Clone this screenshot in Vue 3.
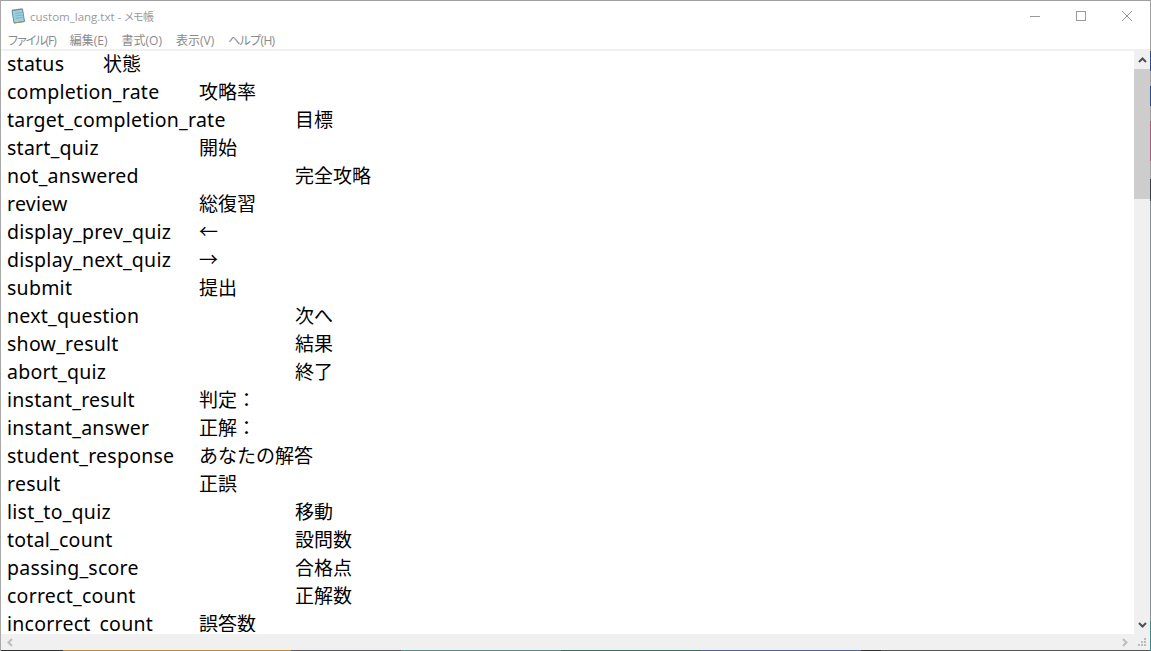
<script setup>
const rows = [
  ['status', '\t', '状態'],
  ['completion_rate', '\t', '攻略率'],
  ['target_completion_rate', '\t', '目標'],
  ['start_quiz', '\t\t', '開始'],
  ['not_answered', '\t\t', '完全攻略'],
  ['review', '\t\t', '総復習'],
  ['display_prev_quiz', '\t', '←'],
  ['display_next_quiz', '\t', '→'],
  ['submit', '\t\t', '提出'],
  ['next_question', '\t\t', '次へ'],
  ['show_result', '\t\t', '結果'],
  ['abort_quiz', '\t\t', '終了'],
  ['instant_result', '\t', '判定：'],
  ['instant_answer', '\t', '正解：'],
  ['student_response', '\t', 'あなたの解答'],
  ['result', '\t\t', '正誤'],
  ['list_to_quiz', '\t\t', '移動'],
  ['total_count', '\t\t', '設問数'],
  ['passing_score', '\t\t', '合格点'],
  ['correct_count', '\t\t', '正解数'],
  ['incorrect_count', '\t', '誤答数']
]
const menus = ['ファイル(F)', '編集(E)', '書式(O)', '表示(V)', 'ヘルプ(H)']
</script>

<template>
  <div class="window">
    <header class="titlebar">
      <svg class="app-icon" width="16" height="16" viewBox="0 0 16 16">
        <path d="M2 2.5 L12.5 1 L14.5 13.5 L4 15 Z" fill="#9fd0e0" stroke="#5f8fa5" stroke-width="1" />
        <path d="M5 5.5 L12 4.5 M5.3 8 L12.4 7 M5.7 10.5 L12.8 9.5" stroke="#7fb0c4" stroke-width="1" />
        <path d="M4 15 L14.5 13.5" stroke="#a89060" stroke-width="1" />
        <path d="M2.5 2.2 L12.5 0.8" stroke="#777" stroke-width="1.4" stroke-dasharray="1 1" />
      </svg>
      <span class="title">custom_lang.txt - <span class="title-app">メモ帳</span></span>
      <div class="controls">
        <svg width="46" height="30" viewBox="0 0 46 30"><path d="M18 15.5 H28" stroke="#999" stroke-width="1" /></svg>
        <svg width="46" height="30" viewBox="0 0 46 30"><rect x="18.5" y="10.5" width="9" height="9" fill="none" stroke="#999" /></svg>
        <svg width="46" height="30" viewBox="0 0 46 30"><path d="M18 10 L28 20 M28 10 L18 20" stroke="#999" stroke-width="1" /></svg>
      </div>
    </header>
    <nav class="menubar">
      <span v-for="m in menus" :key="m" class="menu">{{ m }}</span>
    </nav>
    <div class="main">
      <div class="text">
        <div v-for="r in rows" :key="r[0]" class="line"><span class="key">{{ r[0] }}</span>{{ r[1] }}<span class="val">{{ r[2] }}</span></div>
      </div>
      <div class="vscroll">
        <div class="arrow">
          <svg width="9" height="6" viewBox="0 0 9 6"><path d="M1 5 L4.5 1.5 L8 5" fill="none" stroke="#505050" stroke-width="2" /></svg>
        </div>
        <div class="thumb"></div>
        <div class="track"></div>
        <div class="arrow">
          <svg width="9" height="6" viewBox="0 0 9 6"><path d="M1 1 L4.5 4.5 L8 1" fill="none" stroke="#505050" stroke-width="2" /></svg>
        </div>
      </div>
    </div>
    <div class="hscroll">
      <div class="harrow">
        <svg width="6" height="9" viewBox="0 0 6 9"><path d="M5 1 L1.5 4.5 L5 8" fill="none" stroke="#bdbdbd" stroke-width="2" /></svg>
      </div>
      <div class="track"></div>
      <div class="harrow">
        <svg width="6" height="9" viewBox="0 0 6 9"><path d="M1 1 L4.5 4.5 L1 8" fill="none" stroke="#bdbdbd" stroke-width="2" /></svg>
      </div>
      <div class="grip">
        <svg width="10" height="10" viewBox="0 0 10 10" fill="#bcbcbc">
          <rect x="7" y="1" width="2" height="2" /><rect x="4" y="4" width="2" height="2" /><rect x="7" y="4" width="2" height="2" />
          <rect x="1" y="7" width="2" height="2" /><rect x="4" y="7" width="2" height="2" /><rect x="7" y="7" width="2" height="2" />
        </svg>
      </div>
    </div>
    <div class="bottom-edge"></div>
  </div>
</template>

<style scoped>
.window {
  position: relative;
  width: 1151px;
  height: 651px;
  display: flex;
  flex-direction: column;
  background: #fff;
  border-top: 1px solid #a0a0a0;
  border-left: 1px solid #a8a8a8;
  box-sizing: border-box;
  overflow: hidden;
  font-family: "Open Sans", "Noto Sans CJK JP", sans-serif;
  font-feature-settings: "palt";
}
.window::after {
  content: "";
  position: absolute;
  top: 0;
  right: 0;
  bottom: 0;
  width: 1px;
  background: linear-gradient(to bottom,
    #a0a0a0 0 50px, #2f4a86 50px 70px, #a0a0a0 70px 85px, #2f4a86 85px 105px,
    #a0a0a0 105px 120px, #a85a7a 120px 160px, #a0a0a0 160px 178px, #3c4048 178px 200px,
    #8a8f96 200px 620px, #3a8a86 620px 651px);
}
.titlebar {
  height: 29px;
  flex: none;
  display: flex;
  align-items: center;
  padding-left: 9px;
}
.app-icon { margin-right: 5px; }
.title { font-size: 11.5px; color: #9a9a9a; margin-left: -1px; white-space: pre; }
.title-app { font-size: 11px; letter-spacing: -0.7px; }
.controls { margin-left: auto; display: flex; margin-right: 1px; }
.controls svg { display: block; }
.menubar {
  height: 19px;
  flex: none;
  display: flex;
  align-items: center;
  gap: 14px;
  padding-left: 7px;
  font-size: 12px;
  color: #8a8a8a;
  border-bottom: 2px solid #f0f0f0;
}
.menu:first-child { letter-spacing: -1px; }
.menu:last-child { letter-spacing: -0.7px; }
.main { flex: 1; display: flex; min-height: 0; }
.text {
  flex: 1;
  padding-left: 6px;
  margin-top: -1px;
  margin-bottom: 2px;
  overflow: hidden;
  font-family: "Noto Sans", "Noto Sans CJK JP", sans-serif;
  font-size: 19.5px;
  font-feature-settings: normal;
  color: #000;
  tab-size: 96px;
}
.line { height: 28px; line-height: 28px; white-space: pre; }
.key { letter-spacing: 0.25px; }
.val { font-size: 19px; }
.vscroll { width: 16px; margin-right: 1px; display: flex; flex-direction: column; background: #f0f0f0; }
.arrow { height: 18px; display: flex; align-items: center; justify-content: center; flex: none; }
.thumb { height: 130px; background: #cdcdcd; flex: none; }
.track { flex: 1; }
.hscroll { height: 16px; flex: none; display: flex; align-items: center; background: #f0f0f0; }
.harrow { width: 17px; height: 16px; display: flex; align-items: center; justify-content: center; }
.grip { width: 17px; height: 16px; margin-right: 1px; display: flex; align-items: center; justify-content: center; background: #f0f0f0; }
.bottom-edge {
  height: 1px;
  flex: none;
  background: linear-gradient(to right,
    #333 0 62px, #c08a3a 62px 290px, #5a5a60 290px 400px, #5e8a86 400px 560px,
    #3f6a62 560px 700px, #55678a 700px 860px, #333 860px 880px, #555 880px 1151px);
}
</style>
